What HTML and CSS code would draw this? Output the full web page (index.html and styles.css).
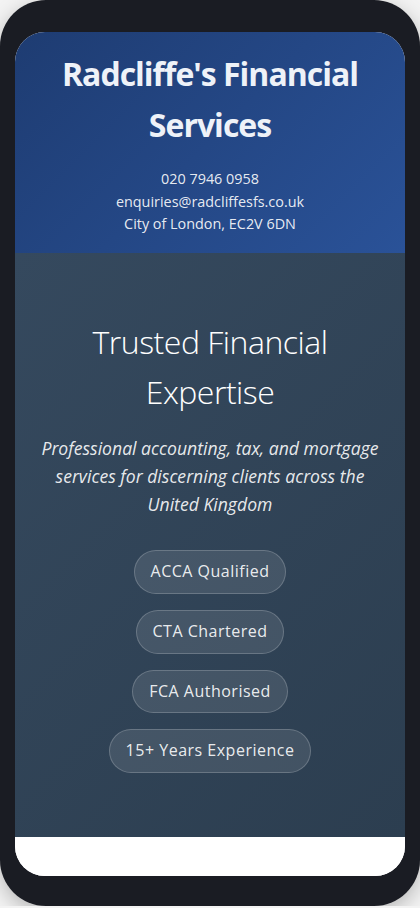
FILE: index.html
```html
<!DOCTYPE html>
<html lang="en">
<head>
<meta charset="utf-8">
<title>Radcliffe's Financial Services</title>
<link rel="stylesheet" href="styles.css">
</head>
<body>
<div class="phone">
  <div class="screen">
    <header class="site-header">
      <h1 class="brand">Radcliffe's Financial Services</h1>
      <div class="contact">
        <div>020 7946 0958</div>
        <div>enquiries@radcliffesfs.co.uk</div>
        <div>City of London, EC2V 6DN</div>
      </div>
    </header>
    <section class="hero">
      <h2 class="hero-title">Trusted Financial Expertise</h2>
      <p class="hero-sub">Professional accounting, tax, and mortgage services for discerning clients across the United Kingdom</p>
      <div class="badges">
        <span class="badge">ACCA Qualified</span>
        <span class="badge">CTA Chartered</span>
        <span class="badge">FCA Authorised</span>
        <span class="badge">15+ Years Experience</span>
      </div>
    </section>
    <section class="next"></section>
  </div>
</div>
</body>
</html>
```

FILE: styles.css
```css
* { box-sizing: border-box; }
html, body { margin: 0; padding: 0; }
body {
  background: #f3f3f3;
  font-family: "Open Sans", "Noto Sans", sans-serif;
}
.phone {
  width: 420px;
  height: 906px;
  background: #1a1c23;
  border-radius: 46px;
  padding: 32px 15px 30px;
  box-shadow: 0 6px 20px rgba(0,0,0,0.25);
}
.screen {
  height: 844px;
  border-radius: 30px;
  overflow: hidden;
  background: #ffffff;
  display: flex;
  flex-direction: column;
}
.site-header {
  background: linear-gradient(135deg, #1e3c72 0%, #2a5298 100%);
  color: #eef2f8;
  text-align: center;
  padding: 16px 20px 17px;
}
.brand {
  margin: 0 0 18px;
  font-size: 32px;
  line-height: 1.6;
  font-weight: 700;
  letter-spacing: -1px;
}
.contact {
  font-size: 14.4px;
  line-height: 22.5px;
  color: rgba(255,255,255,0.9);
}
.hero {
  background: linear-gradient(135deg, #35495e 0%, #2c3e50 100%);
  color: #ffffff;
  text-align: center;
  padding: 64px 20px 64px;
}
.hero-title {
  margin: 0 0 16px;
  font-size: 32px;
  line-height: 1.58;
  font-weight: 300;
  letter-spacing: -0.5px;
}
.hero-sub {
  margin: 0 0 32px;
  font-size: 17.6px;
  line-height: 1.6;
  font-style: italic;
  color: rgba(255,255,255,0.9);
}
.badges {
  display: flex;
  flex-direction: column;
  align-items: center;
  gap: 16px;
}
.badge {
  display: inline-block;
  padding: 8px 16px;
  border: 1px solid rgba(255,255,255,0.2);
  background: rgba(255,255,255,0.1);
  border-radius: 25px;
  font-size: 16px;
  line-height: 1.6;
  letter-spacing: 0.5px;
  color: rgba(255,255,255,0.9);
}
.next {
  flex: 1;
  background: #ffffff;
}
```
